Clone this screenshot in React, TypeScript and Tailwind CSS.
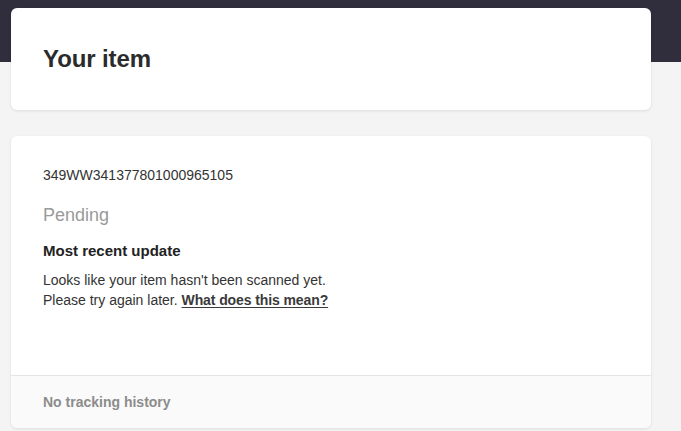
import React from "react";

export default function App() {
  return (
    <div
      className="min-h-[431px] w-full bg-[#f4f4f4] overflow-hidden"
      style={{ fontFamily: '"Liberation Sans", Arial, sans-serif' }}
    >
      <div className="h-[62px] bg-[#302e3d]" />
      <div className="-mt-[54px] pl-[11px] pr-[30px] flex flex-col gap-[26px]">
        <div className="h-[102px] bg-white rounded-[6px] shadow-[0_1px_3px_rgba(0,0,0,0.10)] px-8 flex items-center">
          <h1 className="text-[24px] leading-[28px] font-bold text-[#2b2b2b] tracking-[-0.1px]">Your item</h1>
        </div>
        <div className="bg-white rounded-[6px] shadow-[0_1px_3px_rgba(0,0,0,0.10)] overflow-hidden">
          <div className="px-8 pt-[29px] pb-[65px]">
            <div className="text-[14px] leading-[20px] text-[#333333]">349WW341377801000965105</div>
            <div className="mt-[18px] text-[18px] leading-[24px] text-[#9a9a9a]">Pending</div>
            <div className="mt-[14px] text-[15px] leading-[20px] font-bold text-[#222222]">Most recent update</div>
            <div className="mt-[9px] text-[14px] leading-[20px] text-[#333333]">
              <div>Looks like your item hasn&apos;t been scanned yet.</div>
              <div>
                Please try again later.{" "}
                <a href="#" className="font-bold underline underline-offset-2 text-[#3a3a3a] tracking-[-0.1px]">What does this mean?</a>
              </div>
            </div>
          </div>
          <div className="h-[53px] border-t border-[#e4e4e4] bg-[#fafafa] px-8 flex items-center">
            <span className="text-[14px] leading-[20px] font-bold text-[#8c8c8c]">No tracking history</span>
          </div>
        </div>
      </div>
    </div>
  );
}
